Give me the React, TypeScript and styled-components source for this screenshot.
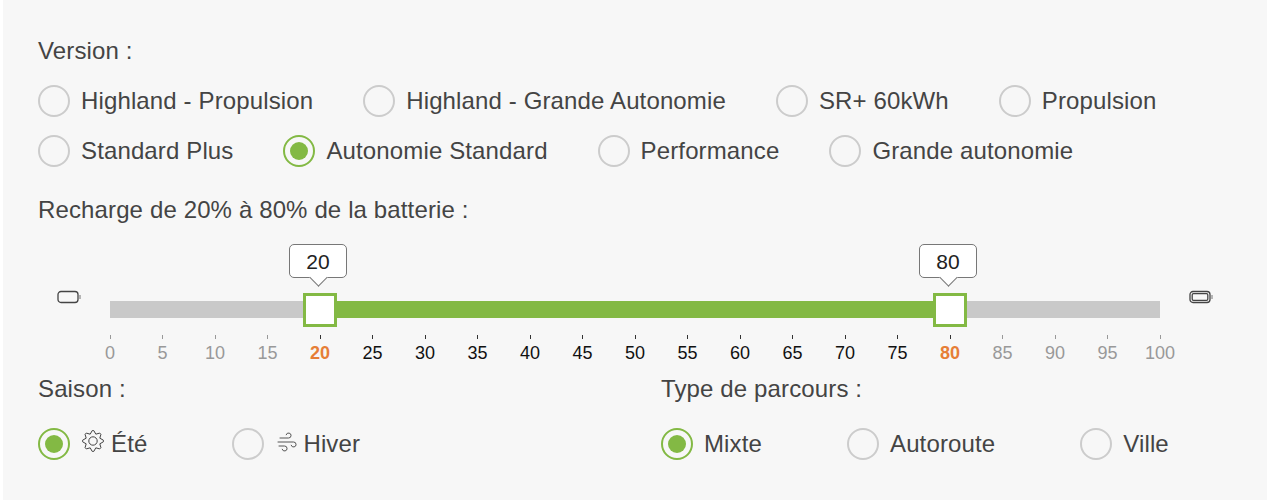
import React from 'react'
import styled, { createGlobalStyle } from 'styled-components'
import { TbWind } from 'react-icons/tb'

const versionRows = [
  ['Highland - Propulsion', 'Highland - Grande Autonomie', 'SR+ 60kWh', 'Propulsion'],
  ['Standard Plus', 'Autonomie Standard', 'Performance', 'Grande autonomie'],
]
const selectedVersion = 'Autonomie Standard'
const rangeFrom = 20
const rangeTo = 80
const ticks = Array.from({ length: 21 }, (_, i) => i * 5)

// 8 pointed teeth round a centre, as in the reference's summer icon
const gearPoints = Array.from({ length: 8 }, (_, i) => {
  const a = (i * Math.PI) / 4 - Math.PI / 2
  const point = (r: number, d: number) =>
    `${(12 + r * Math.cos(a + d)).toFixed(2)},${(12 + r * Math.sin(a + d)).toFixed(2)}`
  return [point(7.4, -0.39), point(10.4, -0.08), point(10.4, 0.08), point(7.4, 0.39)].join(' ')
}).join(' ')

type RadioProps = {
  label: string
  checked?: boolean
  icon?: React.ReactNode
}

const Radio: React.FC<RadioProps> = ({ label, checked, icon }) => (
  <RadioItem>
    <RadioCircle $checked={checked} />
    {icon}
    <span>{label}</span>
  </RadioItem>
)

const Handle: React.FC<{ value: number }> = ({ value }) => (
  <Thumb style={{ left: `${value}%` }}>
    <Bubble>{value}</Bubble>
  </Thumb>
)

const BatteryIcon: React.FC<{ full?: boolean }> = ({ full }) => (
  <svg width="24" height="14" viewBox="0 0 24 14" fill="none">
    <rect x="1" y="1.5" width="20" height="11" rx="3" stroke="#444" strokeWidth="1.3" />
    {full && <rect x="3.2" y="3.7" width="15.6" height="6.6" rx="1.2" stroke="#444" strokeWidth="1.3" />}
    <path d="M23 5v4" stroke="#888" strokeWidth="1.2" />
  </svg>
)

const SunIcon: React.FC = () => (
  <SunSvg viewBox="0 0 24 24" fill="none" stroke="#444" strokeWidth="1" strokeLinejoin="round">
    <polygon points={gearPoints} />
    <circle cx="12" cy="12" r="4.2" />
  </SunSvg>
)

export default function App() {
  return (
    <>
      <GlobalStyle />
      <Panel>
        <Title>Version :</Title>
        <VersionRows>
          {versionRows.map((row, i) => (
            <RadioRow key={i} $gap={50}>
              {row.map(v => (
                <Radio key={v} label={v} checked={v === selectedVersion} />
              ))}
            </RadioRow>
          ))}
        </VersionRows>
        <RechargeTitle>Recharge de 20% à 80% de la batterie :</RechargeTitle>
        <SliderRow>
          <BatterySlot>
            <BatteryIcon />
          </BatterySlot>
          <SliderColumn>
            <Track>
              <Range style={{ left: `${rangeFrom}%`, width: `${rangeTo - rangeFrom}%` }} />
              <Handle value={rangeFrom} />
              <Handle value={rangeTo} />
            </Track>
            <Scale>
              {ticks.map(t => (
                <Tick key={t}>
                  <TickMark $active={t >= rangeFrom && t <= rangeTo} />
                  <TickLabel
                    $inside={t > rangeFrom && t < rangeTo}
                    $edge={t === rangeFrom || t === rangeTo}
                  >
                    {t}
                  </TickLabel>
                </Tick>
              ))}
            </Scale>
          </SliderColumn>
          <BatterySlot>
            <BatteryIcon full />
          </BatterySlot>
        </SliderRow>
        <Bottom>
          <div>
            <GroupTitle>Saison :</GroupTitle>
            <RadioRow $gap={85}>
              <Radio label="Été" checked icon={<SunIcon />} />
              <Radio label="Hiver" icon={<WindIcon />} />
            </RadioRow>
          </div>
          <div>
            <GroupTitle>Type de parcours :</GroupTitle>
            <RadioRow $gap={85}>
              <Radio label="Mixte" checked />
              <Radio label="Autoroute" />
              <Radio label="Ville" />
            </RadioRow>
          </div>
        </Bottom>
      </Panel>
    </>
  )
}

const GlobalStyle = createGlobalStyle`
  html, body {
    margin: 0;
    background: #fff;
  }
  body {
    font-family: 'Liberation Sans', Arial, sans-serif;
    color: #444;
  }
`

const Panel = styled.div`
  box-sizing: border-box;
  width: 1264px;
  height: 500px;
  margin-left: 3px;
  padding: 37px 35px 0;
  background: #f7f7f7;
  font-size: 24px;
  line-height: 28px;
  letter-spacing: 0.13px;
`

const Title = styled.div``

const VersionRows = styled.div`
  display: flex;
  flex-direction: column;
  gap: 18px;
  margin-top: 20px;
`

const RadioRow = styled.div<{ $gap: number }>`
  display: flex;
  gap: ${p => p.$gap}px;
`

const RadioItem = styled.label`
  display: flex;
  align-items: center;
  height: 32px;
  white-space: nowrap;
`

const RadioCircle = styled.span<{ $checked?: boolean }>`
  box-sizing: border-box;
  display: flex;
  align-items: center;
  justify-content: center;
  width: 32px;
  height: 32px;
  margin-right: 11px;
  border-radius: 50%;
  border: 2px solid ${p => (p.$checked ? '#83b944' : '#ccc')};

  &::after {
    content: '';
    display: ${p => (p.$checked ? 'block' : 'none')};
    width: 18px;
    height: 18px;
    border-radius: 50%;
    background: #83b944;
  }
`

const SunSvg = styled.svg`
  width: 24px;
  height: 24px;
  margin: -6px 6px 0 0;
`

const WindIcon = styled(TbWind)`
  width: 24px;
  height: 24px;
  margin: -4px 4px 0 0;
  color: #555;
  stroke-width: 1;
`

const RechargeTitle = styled.div`
  margin-top: 29px;
`

const SliderRow = styled.div`
  display: flex;
  margin-top: 77px;
`

const BatterySlot = styled.div`
  flex: none;
  width: 72px;
  height: 14px;
  margin-top: -19px;
  padding-left: 19px;
  box-sizing: border-box;

  &:last-child {
    padding-left: 29px;
  }
`

const SliderColumn = styled.div`
  flex: none;
  width: 1050px;
`

const Track = styled.div`
  position: relative;
  height: 17px;
  background: #c9c9c9;
`

const Range = styled.div`
  position: absolute;
  top: 0;
  bottom: 0;
  background: #83b944;
`

const Thumb = styled.div`
  position: absolute;
  top: -8px;
  box-sizing: border-box;
  width: 34px;
  height: 34px;
  margin-left: -17px;
  border: 3px solid #83b944;
  background: #fff;
`

const Bubble = styled.div`
  position: absolute;
  left: 50%;
  bottom: 46px;
  box-sizing: border-box;
  width: 58px;
  height: 34px;
  margin-left: -31px;
  border: 1px solid #777;
  border-radius: 5px;
  background: #fff;
  color: #222;
  font-size: 21px;
  line-height: 34px;
  letter-spacing: 0;
  text-align: center;

  &::after {
    content: '';
    position: absolute;
    left: 50%;
    bottom: -7px;
    width: 12px;
    height: 12px;
    margin-left: -6px;
    border-right: 1px solid #777;
    border-bottom: 1px solid #777;
    background: #fff;
    transform: rotate(45deg);
  }
`

const Scale = styled.div`
  display: flex;
  justify-content: space-between;
  margin-top: 17px;
`

const Tick = styled.div`
  width: 0;
  display: flex;
  flex-direction: column;
  align-items: center;
`

const TickMark = styled.div<{ $active: boolean }>`
  flex: none;
  width: 1px;
  height: 4px;
  background: ${p => (p.$active ? '#333' : '#999')};
`

const TickLabel = styled.div<{ $inside: boolean; $edge: boolean }>`
  margin-top: 4px;
  font-size: 18px;
  line-height: 20px;
  letter-spacing: 0;
  color: ${p => (p.$edge ? '#e67e36' : p.$inside ? '#111' : '#999')};
  font-weight: ${p => (p.$edge ? 700 : 400)};
`

const Bottom = styled.div`
  display: grid;
  grid-template-columns: 623px 1fr;
  margin-top: 12px;
`

const GroupTitle = styled.div`
  margin-bottom: 25px;
`
